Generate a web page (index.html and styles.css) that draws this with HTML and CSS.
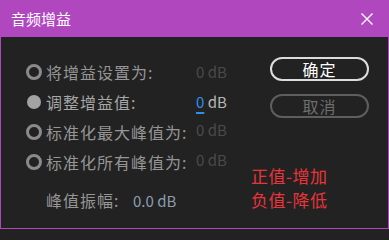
FILE: index.html
```html
<!DOCTYPE html>
<html lang="zh">
<head>
<meta charset="utf-8">
<title>音频增益</title>
<link rel="stylesheet" href="styles.css">
</head>
<body>
<div class="dialog">
  <div class="titlebar">
    <span class="title">音频增益</span>
    <svg class="close" width="12" height="12" viewBox="0 0 12 12"><path d="M0.5 0.5 L11.5 11.5 M11.5 0.5 L0.5 11.5" stroke="#ffffff" stroke-width="1.4" fill="none"/></svg>
  </div>
  <div class="content">
    <div class="options">
      <div class="row">
        <span class="radio"></span>
        <span class="label">将增益设置为:</span>
        <span class="value disabled"><span class="num">0</span> dB</span>
      </div>
      <div class="row">
        <span class="radio checked"></span>
        <span class="label active">调整增益值:</span>
        <span class="value"><span class="num edit">0</span> <span class="unit">dB</span></span>
      </div>
      <div class="row">
        <span class="radio"></span>
        <span class="label">标准化最大峰值为:</span>
        <span class="value disabled raised"><span class="num">0</span> dB</span>
      </div>
      <div class="row">
        <span class="radio"></span>
        <span class="label">标准化所有峰值为:</span>
        <span class="value disabled raised"><span class="num">0</span> dB</span>
      </div>
      <div class="peak">
        <span class="peak-label">峰值振幅:</span>
        <span class="peak-value">0.0 dB</span>
      </div>
    </div>
    <div class="side">
      <button class="btn primary">确定</button>
      <button class="btn secondary">取消</button>
      <div class="note">
        <div>正值-增加</div>
        <div>负值-降低</div>
      </div>
    </div>
  </div>
</div>
</body>
</html>
```

FILE: styles.css
```css
html, body {
  margin: 0;
  padding: 0;
  background: #222222;
}
body {
  font-family: "Noto Sans CJK SC", "Noto Sans", sans-serif;
}
.dialog {
  width: 389px;
  height: 229px;
  box-sizing: border-box;
  background: #b047bf;
  padding: 0 1px 1px 1px;
  display: flex;
  flex-direction: column;
}
.titlebar {
  height: 37px;
  flex: none;
  display: flex;
  align-items: center;
  justify-content: space-between;
  padding: 1px 15px 0 10px;
  box-sizing: border-box;
}
.title {
  color: #ffffff;
  font-size: 15px;
  line-height: 20px;
}
.close {
  display: block;
}
.content {
  flex: 1;
  background: #222222;
  display: flex;
  padding-top: 20px;
}
.options {
  width: 224px;
  padding-left: 25px;
  display: flex;
  flex-direction: column;
}
.row {
  height: 30px;
  display: flex;
  align-items: center;
}
.radio {
  width: 16px;
  height: 16px;
  box-sizing: border-box;
  border: 3px solid #8a8a8a;
  border-radius: 50%;
  margin-right: 4px;
  flex: none;
}
.radio.checked {
  border: none;
  width: 14px;
  height: 14px;
  margin: 0 5px 0 1px;
  background: #a3a3a3;
}
.label {
  width: 150px;
  flex: none;
  color: #969696;
  font-size: 16px;
  letter-spacing: 1px;
  line-height: 30px;
  white-space: nowrap;
}
.label.active {
  color: #a6a6a6;
}
.value {
  font-size: 15px;
  line-height: 20px;
  color: #b8b8b8;
  white-space: nowrap;
}
.value.disabled {
  color: #4a4a4a;
}
.value.raised {
  padding-bottom: 5px;
}
.num.edit {
  color: #2f8eea;
  text-decoration: underline;
  text-decoration-thickness: 1.5px;
  text-underline-offset: 4px;
}
.peak {
  margin-top: 8px;
  height: 30px;
  display: flex;
  align-items: center;
  padding-left: 20px;
}
.peak-label {
  width: 87px;
  color: #969696;
  font-size: 16px;
  letter-spacing: 1px;
}
.peak-value {
  color: #8f9cb0;
  font-size: 15px;
}
.side {
  display: flex;
  flex-direction: column;
  padding-left: 1px;
}
.btn {
  width: 99px;
  height: 24px;
  margin-left: 19px;
  box-sizing: border-box;
  border-radius: 12px;
  background: transparent;
  font-family: "Noto Sans CJK SC", sans-serif;
  font-size: 16px;
  line-height: 20px;
  padding: 0;
  letter-spacing: 1px;
}
.btn.primary {
  border: 2px solid #dcdcdc;
  color: #ffffff;
}
.btn.secondary {
  margin-top: 13px;
  border: 2px solid #5e5e5e;
  color: #6e6e6e;
}
.note {
  margin-top: 46px;
  color: #e8343a;
  font-size: 17px;
  line-height: 24px;
  letter-spacing: 0.5px;
}
```
